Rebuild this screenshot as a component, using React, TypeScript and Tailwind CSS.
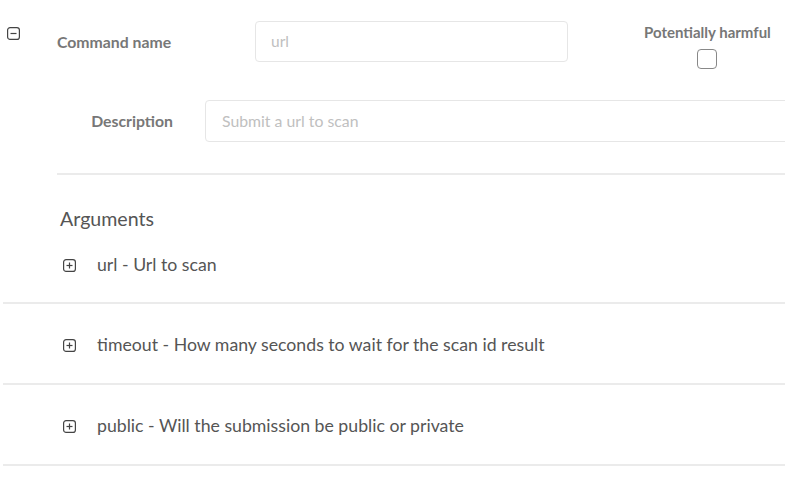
import React from 'react';

function BoxIcon({ plus }: { plus?: boolean }) {
  return (
    <svg width="13" height="13" viewBox="0 0 13 13" fill="none" stroke="#444" strokeWidth="1.2">
      <rect x="0.6" y="0.6" width="11.8" height="11.8" rx="2.5" />
      <line x1="3.5" y1="6.5" x2="9.5" y2="6.5" />
      {plus && <line x1="6.5" y1="3.5" x2="6.5" y2="9.5" />}
    </svg>
  );
}

const args = [
  { name: 'url', desc: 'Url to scan' },
  { name: 'timeout', desc: 'How many seconds to wait for the scan id result' },
  { name: 'public', desc: 'Will the submission be public or private' },
];

export default function App() {
  return (
    <div
      className="w-[785px] h-[491px] overflow-hidden bg-white text-[#555]"
      style={{ fontFamily: 'Lato, "Open Sans", sans-serif' }}
    >
      <div className="flex items-start pt-[21px] h-[62px]">
        <div className="w-[57px] shrink-0 pl-[7px] pt-[6px]">
          <BoxIcon />
        </div>
        <div className="w-[198px] shrink-0 h-[41px] flex items-center text-[15.8px] font-bold text-[#777]">
          Command name
        </div>
        <div className="w-[313px] shrink-0 h-[41px] border border-[#e6e6e6] rounded-[4px] flex items-center px-[15px] text-[15.5px] text-[#c0c0c0]">
          url
        </div>
        <div className="w-[76px] shrink-0" />
        <div className="flex flex-col items-center mt-[1px]">
          <span className="text-[15px] font-bold text-[#777] leading-[20px] whitespace-nowrap">Potentially harmful</span>
          <span className="mt-[7px] w-[20px] h-[20px] border border-[#888] rounded-[4px]" />
        </div>
      </div>

      <div className="flex items-center mt-[38px]">
        <div className="w-[173px] shrink-0 text-right text-[15.8px] font-bold text-[#777]">Description</div>
        <div className="ml-[32px] w-[640px] shrink-0 h-[42px] border border-[#e6e6e6] rounded-[4px] flex items-center px-[16px] text-[15.8px] text-[#c0c0c0]">
          Submit a url to scan
        </div>
      </div>

      <div className="ml-[57px] mt-[31px] border-t-2 border-[#ebebeb]" />

      <div className="pl-[60px] pt-[31px] text-[19.6px] text-[#555] leading-[26px]">Arguments</div>

      <div>
        {args.map((a, i) => (
          <div
            key={a.name}
            className={`ml-[3px] flex items-center border-b-2 border-[#ebebeb] ${i === 0 ? 'h-[72px] pb-[3px]' : 'h-[81px] pt-[3px]'}`}
          >
            <div className="w-[94px] shrink-0 pl-[60px] flex">
              <BoxIcon plus />
            </div>
            <span className="text-[17.7px] text-[#555]">
              {a.name} - {a.desc}
            </span>
          </div>
        ))}
      </div>
    </div>
  );
}
